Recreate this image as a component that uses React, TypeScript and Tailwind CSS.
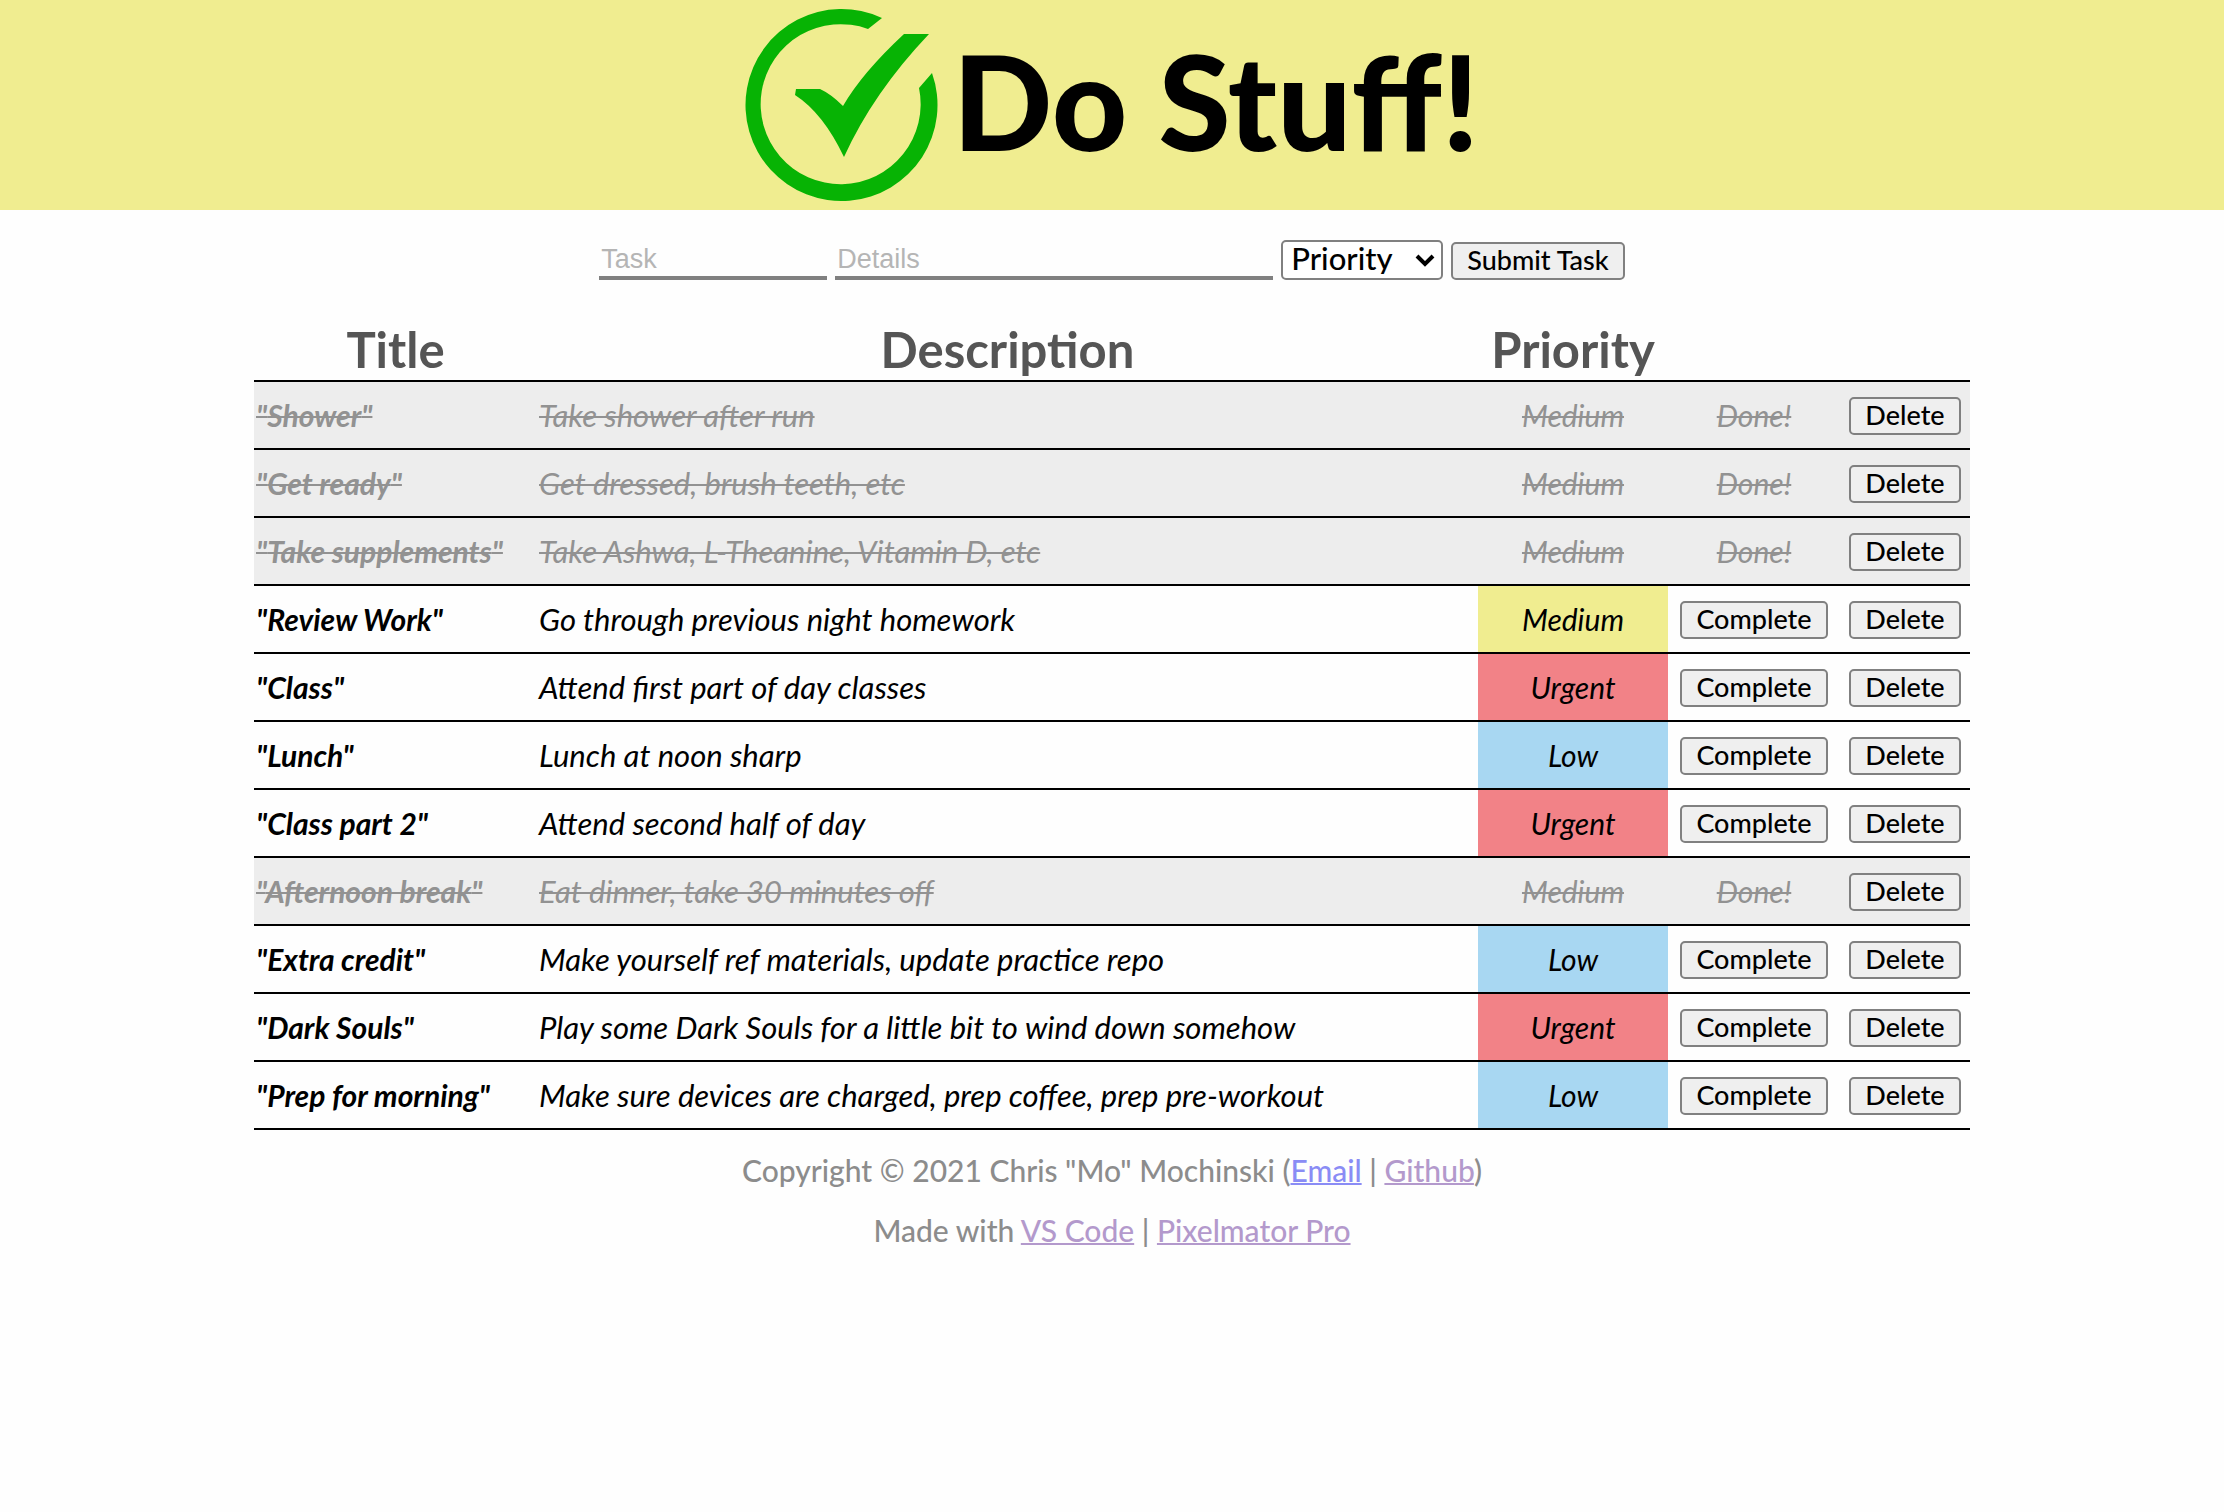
import React from "react";

type Level = "Medium" | "Urgent" | "Low";

interface Task {
  title: string;
  details: string;
  priority: Level;
  done?: boolean;
}

const tasks: Task[] = [
  { title: "Shower", details: "Take shower after run", priority: "Medium", done: true },
  { title: "Get ready", details: "Get dressed, brush teeth, etc", priority: "Medium", done: true },
  { title: "Take supplements", details: "Take Ashwa, L-Theanine, Vitamin D, etc", priority: "Medium", done: true },
  { title: "Review Work", details: "Go through previous night homework", priority: "Medium" },
  { title: "Class", details: "Attend first part of day classes", priority: "Urgent" },
  { title: "Lunch", details: "Lunch at noon sharp", priority: "Low" },
  { title: "Class part 2", details: "Attend second half of day", priority: "Urgent" },
  { title: "Afternoon break", details: "Eat dinner, take 30 minutes off", priority: "Medium", done: true },
  { title: "Extra credit", details: "Make yourself ref materials, update practice repo", priority: "Low" },
  { title: "Dark Souls", details: "Play some Dark Souls for a little bit to wind down somehow", priority: "Urgent" },
  { title: "Prep for morning", details: "Make sure devices are charged, prep coffee, prep pre-workout", priority: "Low" },
];

const levelColor: Record<Level, string> = {
  Medium: "bg-[#f0ed90]",
  Urgent: "bg-[#f28287]",
  Low: "bg-[#a8d7f2]",
};

function Logo() {
  return (
    <svg viewBox="0 0 192 192" className="size-48 shrink-0 overflow-visible" fill="#07b304" aria-hidden="true">
      <path d="M137 10A96 96 0 1 0 187 65L174 80A80 80 0 1 1 123 21Z" />
      <path d="M159 26H184Q128 85 99 149Q78 105 50 87L51 81H75Q86 86 98 98Q117 65 159 26Z" />
    </svg>
  );
}

function Button({ children, type = "button" }: { children: React.ReactNode; type?: "button" | "submit" }) {
  return (
    <button
      type={type}
      className="h-[38px] rounded-[5px] border-2 border-[#808080] bg-[#efefef] px-3.5 pb-0.5 text-[27px] leading-8 font-medium whitespace-nowrap text-black not-italic"
    >
      {children}
    </button>
  );
}

function Row({ task }: { task: Task }) {
  const text = task.done ? "text-[#929292] line-through decoration-2" : "text-black";
  return (
    <tr className={`h-[68px] border-b-2 border-black text-[30px] italic ${task.done ? "bg-[#ededed]" : ""}`}>
      <td className={`px-0.5 font-bold whitespace-nowrap ${text}`}>"{task.title}"</td>
      <td className={`px-0.5 text-[31px] ${text}`}>{task.details}</td>
      <td className={`text-center ${text} ${task.done ? "" : levelColor[task.priority]}`}>{task.priority}</td>
      <td className={`text-center ${text}`}>
        {task.done ? "Done!" : <div className="flex justify-center pt-0.5"><Button>Complete</Button></div>}
      </td>
      <td><div className="flex justify-center pt-0.5"><Button>Delete</Button></div></td>
    </tr>
  );
}

export default function App() {
  return (
    <div className="min-h-screen bg-[#fefefe] font-[Lato,sans-serif]">
      <header className="flex h-[210px] items-center justify-center gap-4 bg-[#f0ed90] pb-0.5">
        <Logo />
        <h1 className="pb-2 text-[131px] leading-none font-black whitespace-nowrap text-black">Do Stuff!</h1>
      </header>

      <form className="mt-[30px] flex items-end justify-center gap-2" onSubmit={(e) => e.preventDefault()}>
        <input
          aria-label="Task"
          placeholder="Task"
          className="h-10 w-[228px] border-b-4 border-[#808080] px-0.5 pt-0.5 font-['Liberation_Sans',sans-serif] text-[27px] placeholder:text-[#b5b5b5]"
        />
        <input
          aria-label="Details"
          placeholder="Details"
          className="h-10 w-[438px] border-b-4 border-[#808080] px-0.5 pt-0.5 font-['Liberation_Sans',sans-serif] text-[27px] placeholder:text-[#b5b5b5]"
        />
        <div className="relative">
          <select
            aria-label="Priority"
            defaultValue="Priority"
            className="block h-10 w-[162px] appearance-none rounded-[5px] border-2 border-[#808080] bg-white pb-1 pl-2 text-[31px] leading-8 font-medium text-black"
          >
            <option>Priority</option>
            <option>Urgent</option>
            <option>Medium</option>
            <option>Low</option>
          </select>
          <svg viewBox="0 0 20 14" className="pointer-events-none absolute top-3.5 right-2 h-3.5 w-5" fill="none" stroke="black" strokeWidth="4" aria-hidden="true">
            <path d="M2 2l8 8 8-8" />
          </svg>
        </div>
        <Button type="submit">Submit Task</Button>
      </form>

      <main className="mx-auto mt-[33px] w-full max-w-[1716px]">
        <table className="w-full table-fixed border-collapse">
          <colgroup>
            <col className="w-[283px]" />
            <col />
            <col className="w-[190px]" />
            <col className="w-[172px]" />
            <col className="w-[130px]" />
          </colgroup>
          <thead>
            <tr className="h-[68px] border-b-2 border-black text-[49px] leading-[60px] text-[#555555]">
              <th scope="col" className="pt-1 font-bold">Title</th>
              <th scope="col" className="pt-1 font-bold">Description</th>
              <th scope="col" className="pt-1 font-bold">Priority</th>
              <td />
              <td />
            </tr>
          </thead>
          <tbody>
            {tasks.map((task) => (
              <Row key={task.title} task={task} />
            ))}
          </tbody>
        </table>
      </main>

      <footer className="mt-5 flex flex-col items-center gap-5 text-[30px] leading-10 font-medium text-[#8c8c8c]">
        <p>
          Copyright © 2021 Chris "Mo" Mochinski (<a href="#email" className="text-[#8a8cf5] underline decoration-2">Email</a> |{" "}
          <a href="#github" className="text-[#b399cc] underline decoration-2">Github</a>)
        </p>
        <p>
          Made with <a href="#vscode" className="text-[#b399cc] underline decoration-2">VS Code</a> |{" "}
          <a href="#pixelmator" className="text-[#b399cc] underline decoration-2">Pixelmator Pro</a>
        </p>
      </footer>
    </div>
  );
}
